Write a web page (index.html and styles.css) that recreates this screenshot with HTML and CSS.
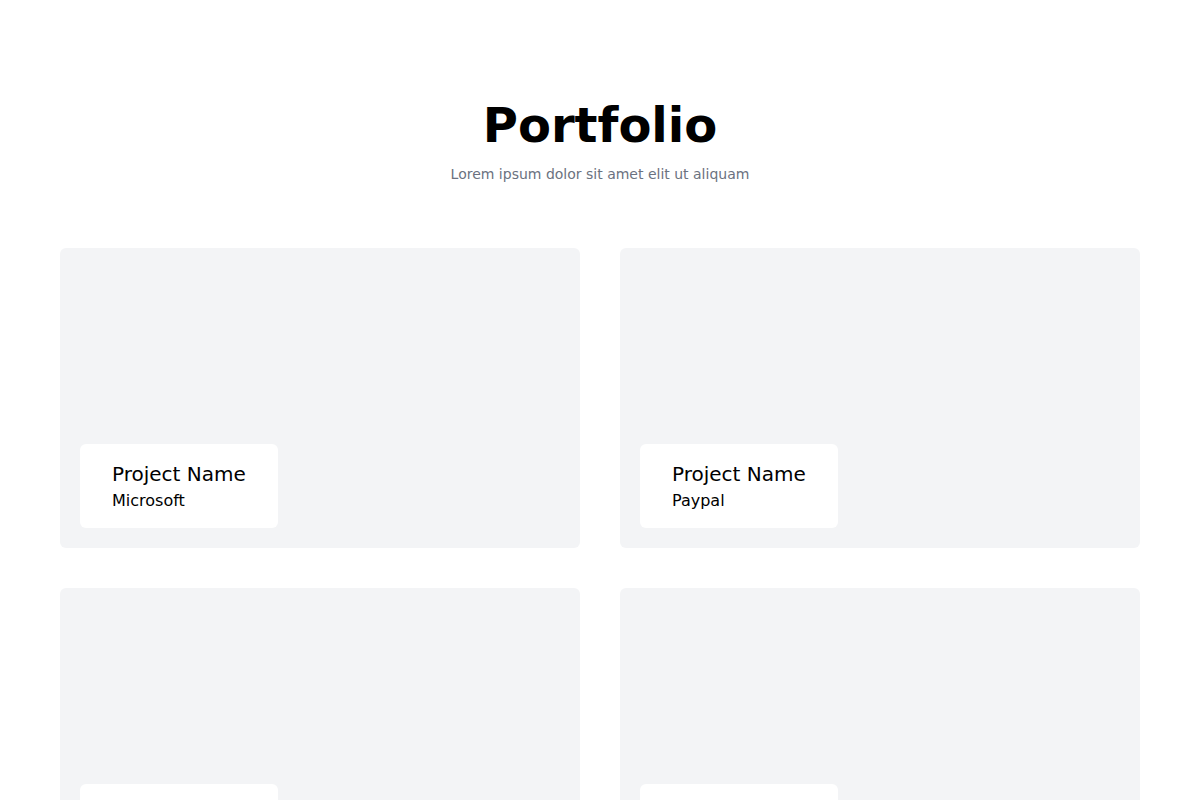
FILE: index.html
```html
<!DOCTYPE html>
<html lang="en">
<head>
<meta charset="utf-8">
<title>Portfolio</title>
<link rel="stylesheet" href="styles.css">
</head>
<body>
<section class="portfolio">
  <header class="intro">
    <h1 class="title">Portfolio</h1>
    <p class="subtitle">Lorem ipsum dolor sit amet elit ut aliquam</p>
  </header>
  <div class="grid">
    <article class="card">
      <div class="label">
        <h3 class="name">Project Name</h3>
        <p class="client">Microsoft</p>
      </div>
    </article>
    <article class="card">
      <div class="label">
        <h3 class="name">Project Name</h3>
        <p class="client">Paypal</p>
      </div>
    </article>
    <article class="card">
      <div class="label">
        <h3 class="name">Project Name</h3>
        <p class="client">Google</p>
      </div>
    </article>
    <article class="card">
      <div class="label">
        <h3 class="name">Project Name</h3>
        <p class="client">Amazon</p>
      </div>
    </article>
  </div>
</section>
</body>
</html>
```

FILE: styles.css
```css
* { box-sizing: border-box; }
html, body { margin: 0; padding: 0; background: #ffffff; }
body { font-family: "DejaVu Sans", "Liberation Sans", sans-serif; color: #000; }

.portfolio {
  padding: 101px 60px 60px;
}

.intro {
  text-align: center;
  margin-bottom: 64px;
}

.title {
  margin: 0;
  font-size: 48px;
  line-height: 48px;
  font-weight: 700;
  color: #000;
}

.subtitle {
  margin: 15px 0 0;
  font-size: 14px;
  line-height: 20px;
  color: #6b7280;
}

.grid {
  display: grid;
  grid-template-columns: 1fr 1fr;
  gap: 40px;
}

.card {
  height: 300px;
  background: #f3f4f6;
  border-radius: 6px;
  display: flex;
  align-items: flex-end;
  padding: 20px;
}

.label {
  background: #ffffff;
  border-radius: 6px;
  padding: 16px 32px;
}

.name {
  margin: 0;
  font-size: 20px;
  line-height: 28px;
  font-weight: 400;
  color: #000;
}

.client {
  margin: 0;
  padding-top: 1px;
  font-size: 16px;
  line-height: 23px;
  color: #000;
}
```
